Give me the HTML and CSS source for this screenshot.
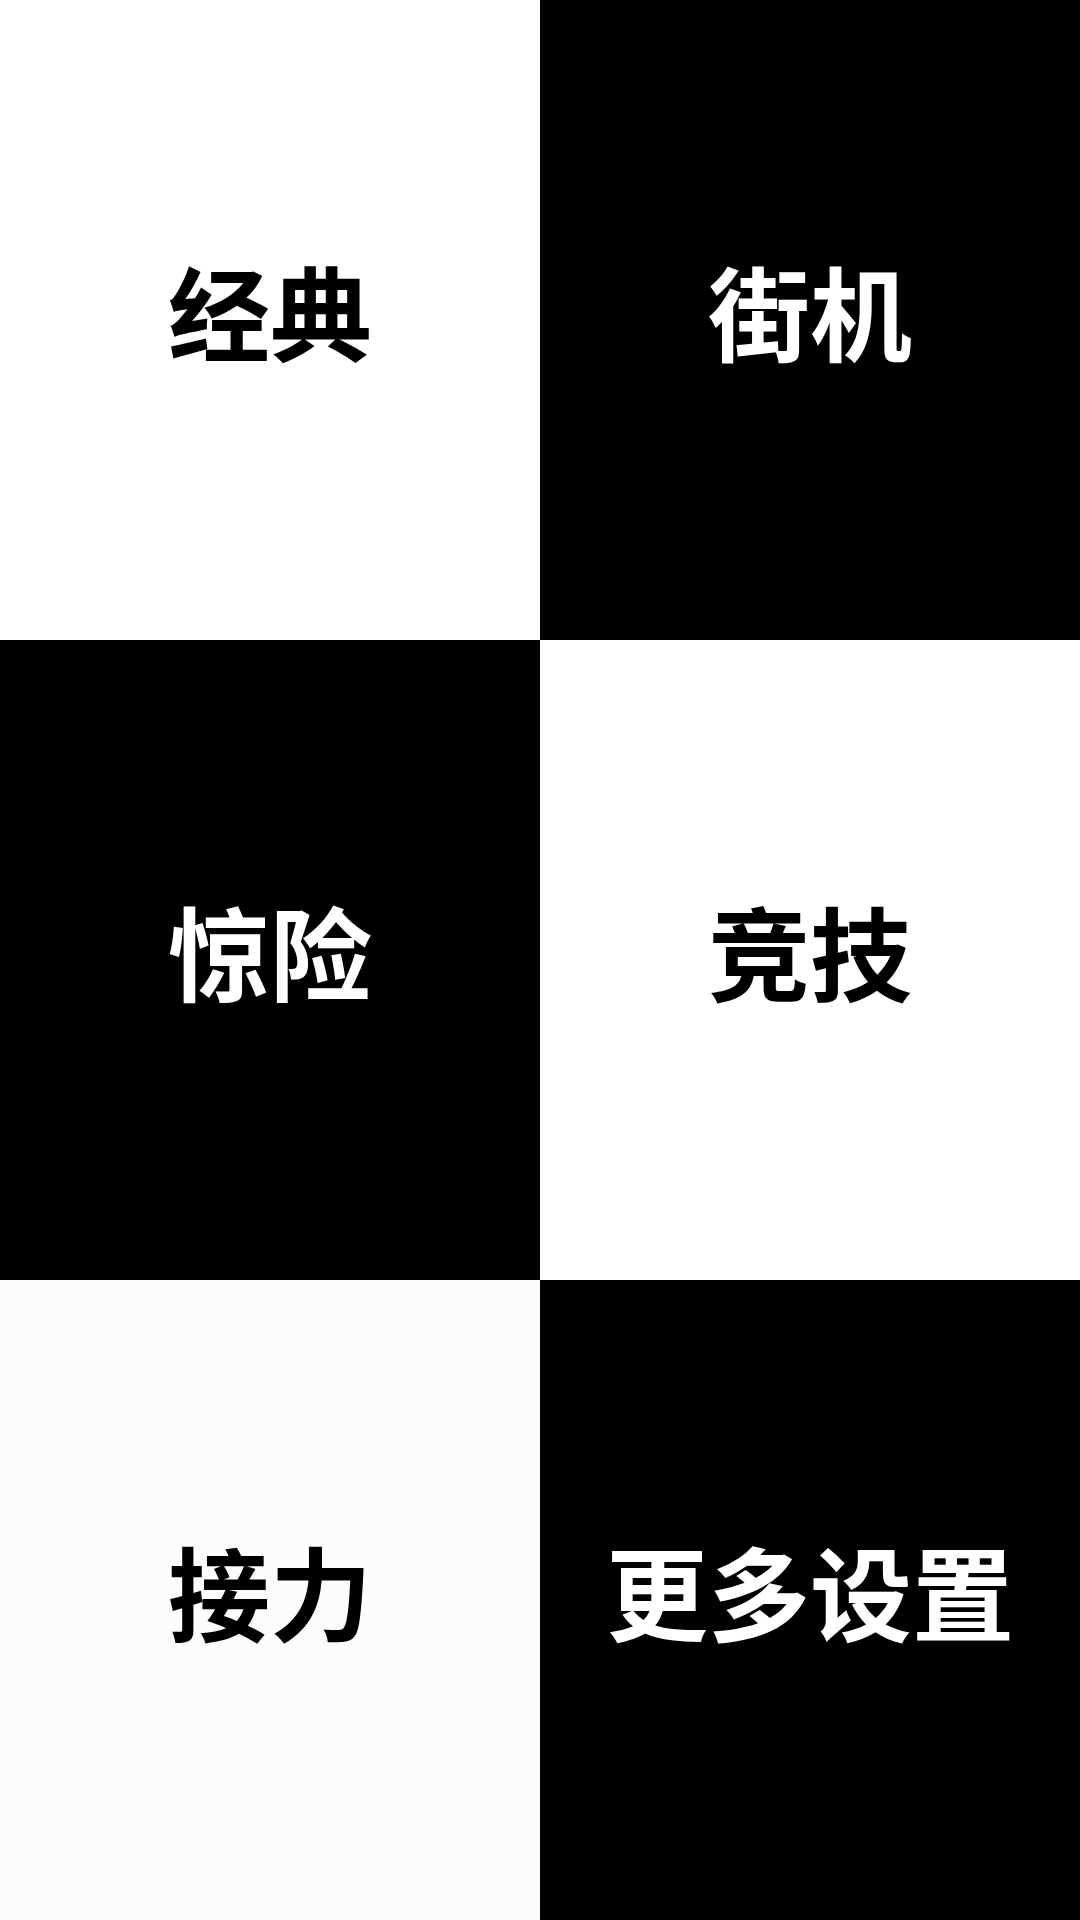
FILE: index.html
```html
<!DOCTYPE html>
<html lang="zh-CN">
<head>
<meta charset="utf-8">
<link rel="stylesheet" href="styles.css">
</head>
<body>
<div class="grid">
  <div class="cell white"><span class="label">经典</span></div>
  <div class="cell black"><span class="label">街机</span></div>
  <div class="cell black"><span class="label">惊险</span></div>
  <div class="cell white"><span class="label">竞技</span></div>
  <div class="cell white soft"><span class="label">接力</span></div>
  <div class="cell black"><span class="label">更多设置</span></div>
</div>
</body>
</html>
```
FILE: styles.css
```css
html, body {
  margin: 0;
  padding: 0;
  width: 1080px;
  height: 1920px;
  overflow: hidden;
}
.grid {
  display: grid;
  grid-template-columns: 540px 540px;
  grid-template-rows: 640px 640px 640px;
  width: 1080px;
  height: 1920px;
}
.cell {
  display: flex;
  align-items: center;
  justify-content: center;
}
.white { background: #ffffff; color: #000000; }
.soft { background: #fcfcfc; }
.black { background: #000000; color: #ffffff; }
.label {
  font-family: "Noto Sans CJK SC", "Noto Sans", sans-serif;
  font-weight: 700;
  font-size: 102px;
  line-height: 1;
  margin-bottom: 20px;
}
```
